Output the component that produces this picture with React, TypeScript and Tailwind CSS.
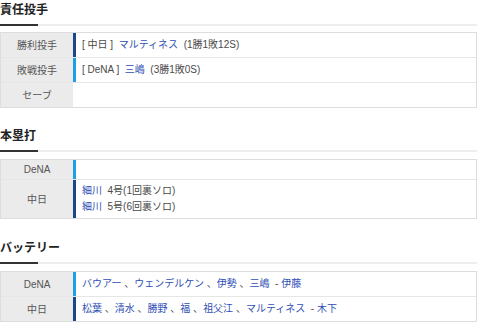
import React from "react";

type Part = { text: string; link?: boolean };

const NAVY = "border-l-[#1b4888]";
const SKY = "border-l-[#1d9fe4]";

function Heading({ title }: { title: string }) {
    return (
        <div className="border-b-2 border-[#eeeeee]">
            <h2 className="inline-block text-[12px] font-bold leading-[18px] text-[#222] pt-[1px] pb-[5px]">{title}</h2>
            <div className="h-0">
                <div className="w-[38px] h-[2px] bg-[#333]" />
            </div>
        </div>
    );
}

function Line({ parts }: { parts: Part[] }) {
    return (
        <div className="whitespace-pre">
            {parts.map((p, i) => (
                <span key={i} className={p.link ? "text-[#2f4fb5]" : "text-[#4a4a4a]"}>
                    {p.text}
                </span>
            ))}
        </div>
    );
}

function Row({ label, bar, lines, last, h, tall }: { label: string; bar: string; lines: Part[][]; last?: boolean; h?: string; tall?: boolean }) {
    return (
        <div className={`flex ${last ? "" : "border-b border-[#e6e6e6]"} ${h ?? ""}`}>
            <div className="w-[72px] shrink-0 bg-[#ebebeb] flex items-center justify-center text-[#555]">{label}</div>
            <div className={`flex-1 border-l-[3px] ${bar} pl-[6px] ${tall ? "py-[3px]" : "py-[4px]"} leading-[16px]`}>
                {lines.map((l, i) => (
                    <Line key={i} parts={l} />
                ))}
            </div>
        </div>
    );
}

// names joined the way the page shows them: "name 、name"
function names(list: string[], catcher: string): Part[] {
    const out: Part[] = [];
    list.forEach((n, i) => {
        if (i > 0) out.push({ text: " 、" });
        out.push({ text: n, link: true });
    });
    out.push({ text: "  - " });
    out.push({ text: catcher, link: true });
    return out;
}

export default function App() {
    return (
        <div
            className="w-[477px] bg-white text-[10px]"
            style={{ fontFamily: '"Liberation Sans", "Noto Sans CJK JP", sans-serif' }}
        >
            <Heading title="責任投手" />
            <div className="mt-[6px] border border-[#dddddd]">
                <Row
                    label="勝利投手"
                    bar={NAVY}
                    lines={[[{ text: "[ 中日 ]  " }, { text: "マルティネス", link: true }, { text: "  (1勝1敗12S)" }]]}
                />
                <Row
                    label="敗戦投手"
                    bar={SKY}
                    lines={[[{ text: "[ DeNA ]  " }, { text: "三嶋", link: true }, { text: "  (3勝1敗0S)" }]]}
                />
                <Row label="セーブ" bar="border-l-transparent" lines={[[{ text: " " }]]} last />
            </div>

            <div className="mt-[18px]">
                <Heading title="本塁打" />
            </div>
            <div className="mt-[7px] border border-[#dddddd]">
                <Row label="DeNA" bar={SKY} lines={[]} h="h-[20px]" />
                <Row
                    label="中日"
                    bar={NAVY}
                    tall
                    lines={[
                        [{ text: "細川", link: true }, { text: "  4号(1回裏ソロ)" }],
                        [{ text: "細川", link: true }, { text: "  5号(6回裏ソロ)" }],
                    ]}
                    last
                />
            </div>

            <div className="mt-[19px]">
                <Heading title="バッテリー" />
            </div>
            <div className="mt-[7px] border border-[#dddddd]">
                <Row label="DeNA" bar={SKY} lines={[names(["バウアー", "ウェンデルケン", "伊勢", "三嶋"], "伊藤")]} />
                <Row
                    label="中日"
                    bar={NAVY}
                    lines={[names(["松葉", "清水", "勝野", "福", "祖父江", "マルティネス"], "木下")]}
                    last
                />
            </div>
        </div>
    );
}
